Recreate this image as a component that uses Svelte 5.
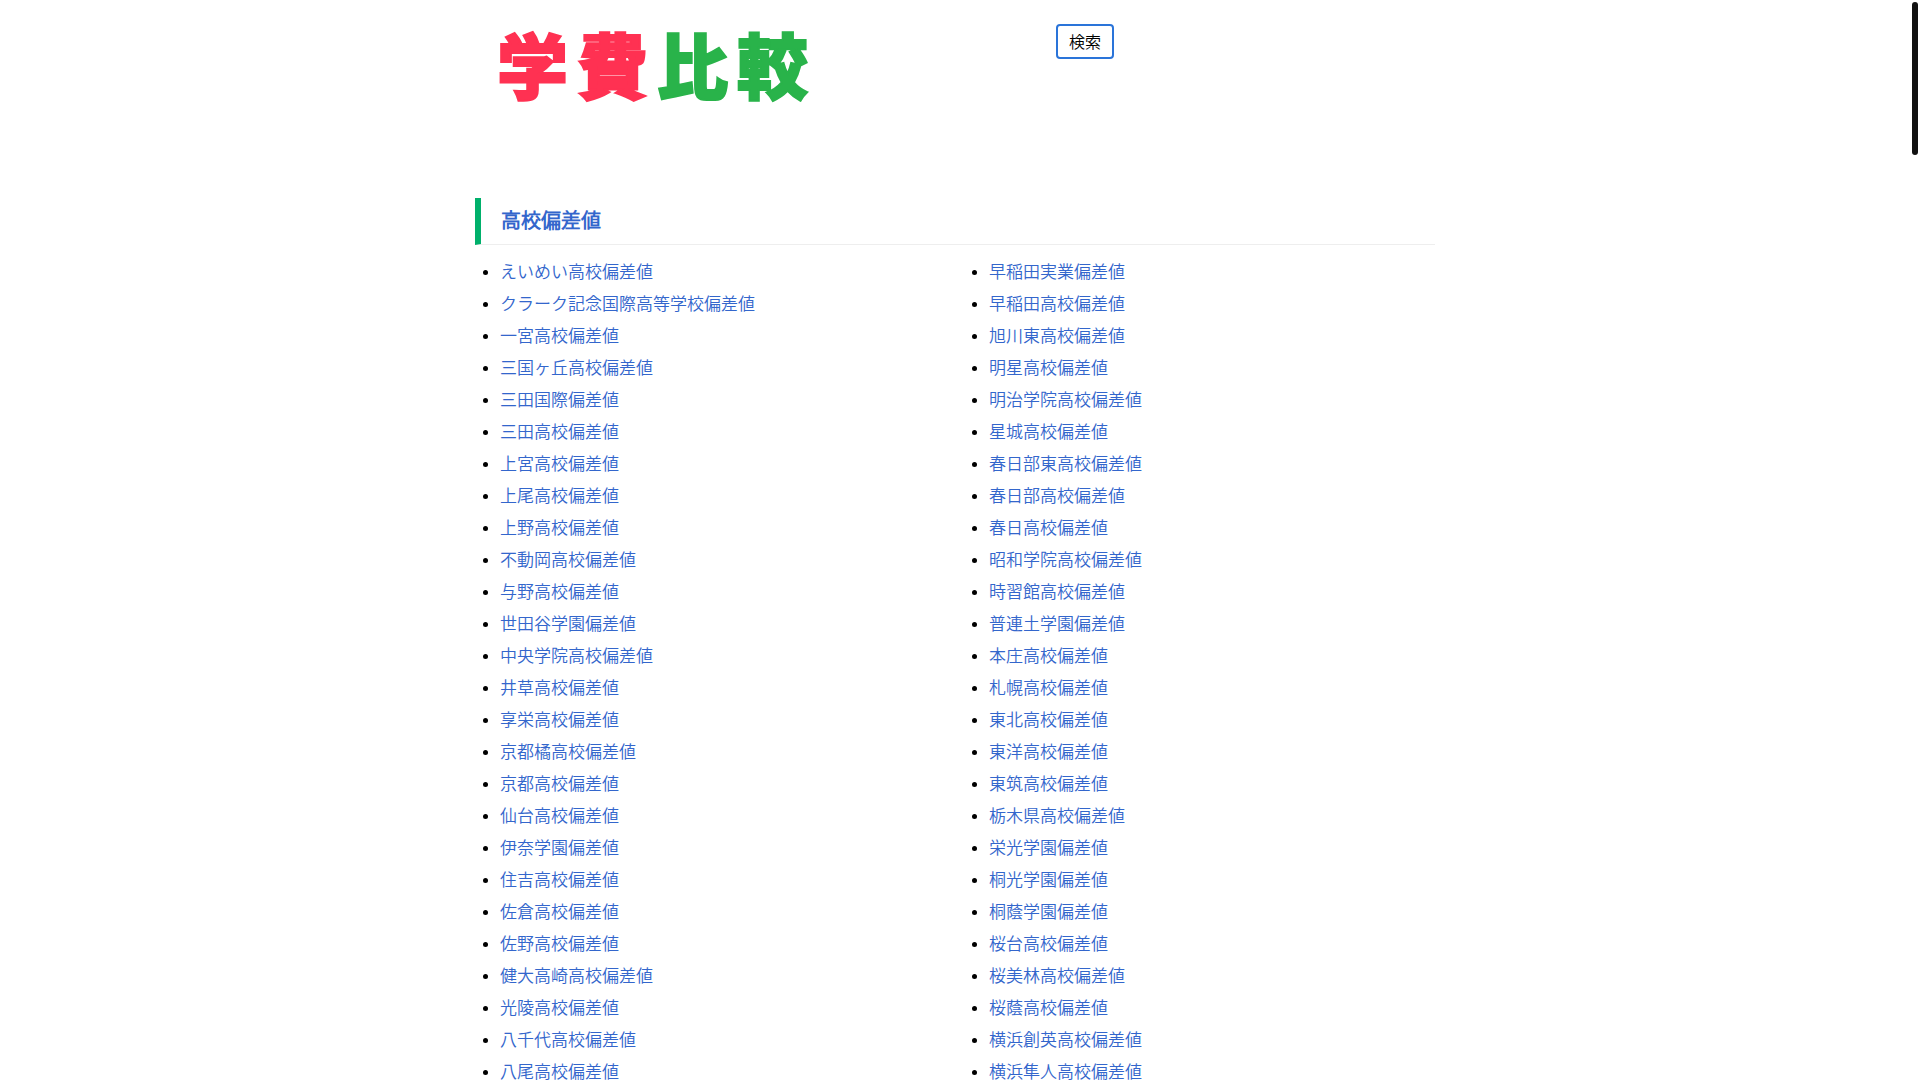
<script lang="ts">
  const schools: string[] = [
    'えいめい高校', 'クラーク記念国際高等学校', '一宮高校', '三国ヶ丘高校', '三田国際', '三田高校',
    '上宮高校', '上尾高校', '上野高校', '不動岡高校', '与野高校', '世田谷学園', '中央学院高校',
    '井草高校', '享栄高校', '京都橘高校', '京都高校', '仙台高校', '伊奈学園', '住吉高校',
    '佐倉高校', '佐野高校', '健大高崎高校', '光陵高校', '八千代高校', '八尾高校',
    '早稲田実業', '早稲田高校', '旭川東高校', '明星高校', '明治学院高校', '星城高校',
    '春日部東高校', '春日部高校', '春日高校', '昭和学院高校', '時習館高校', '普連土学園', '本庄高校',
    '札幌高校', '東北高校', '東洋高校', '東筑高校', '栃木県高校', '栄光学園', '桐光学園',
    '桐蔭学園', '桜台高校', '桜美林高校', '桜蔭高校', '横浜創英高校', '横浜隼人高校',
  ];
</script>

<svelte:head>
  <title>学費比較</title>
</svelte:head>

<div class="page">
  <header class="site-header">
    <a class="logo" href="#top">
      <span class="red">学</span><span class="red">費</span><span class="green">比</span><span class="green">較</span>
    </a>
    <form class="search" onsubmit={(e) => e.preventDefault()}>
      <button type="submit">検索</button>
    </form>
  </header>

  <main>
    <h2><a href="#list">高校偏差値</a></h2>
    <ul id="list">
      {#each schools as school}
        <li><a href="#{school}">{school}偏差値</a></li>
      {/each}
    </ul>
  </main>
</div>

<div class="scroll-thumb"></div>

<style>
  :global(html) {
    scrollbar-width: none;
  }

  :global(body) {
    background: #fff;
    color: #000;
    font-family: "Liberation Sans", "Noto Sans CJK JP DemiLight", "Noto Sans CJK JP", sans-serif;
    font-size: 17px;
    line-height: 32px;
  }

  .page {
    max-width: 960px;
    margin: 0 auto;
    padding-right: 10px;
  }

  a {
    color: #36c;
    text-decoration: none;
  }

  a:hover {
    text-decoration: underline;
  }

  /* header */
  .site-header {
    display: grid;
    grid-template-columns: minmax(0, 1fr) 379px;
    align-items: start;
    padding: 24px 0 98px;
  }

  .logo {
    display: flex;
    gap: 9px;
    padding-left: 22px;
    font-family: "Noto Sans CJK JP", sans-serif;
    font-size: 71px;
    font-weight: 900;
    line-height: 76px;
    white-space: nowrap;
    -webkit-text-stroke: 2px currentColor;
  }

  .logo:hover {
    text-decoration: none;
  }

  .red { color: #ff3152; }
  .green { color: #29b34a; }

  .search {
    display: flex;
  }

  button {
    padding: 3px 11px 0;
    background: #fff;
    border: 2px solid #2a74d9;
    border-radius: 4px;
    color: #000;
    font-family: inherit;
    font-size: 16px;
    line-height: 28px;
    cursor: pointer;
  }

  /* list */
  h2 {
    margin: 0 0 12px;
    padding: 7px 20px;
    border-left: 6px solid #00b06b;
    border-bottom: 1px solid #eee;
    font-size: 20px;
    font-weight: 700;
    line-height: 32px;
  }

  ul {
    column-count: 2;
    column-gap: 18px;
    margin: 0;
    padding: 0;
  }

  li {
    margin-left: 25px;
  }

  .scroll-thumb {
    position: fixed;
    top: 2px;
    right: 2px;
    width: 6px;
    height: 153px;
    border-radius: 3px;
    background: #111;
  }
</style>
